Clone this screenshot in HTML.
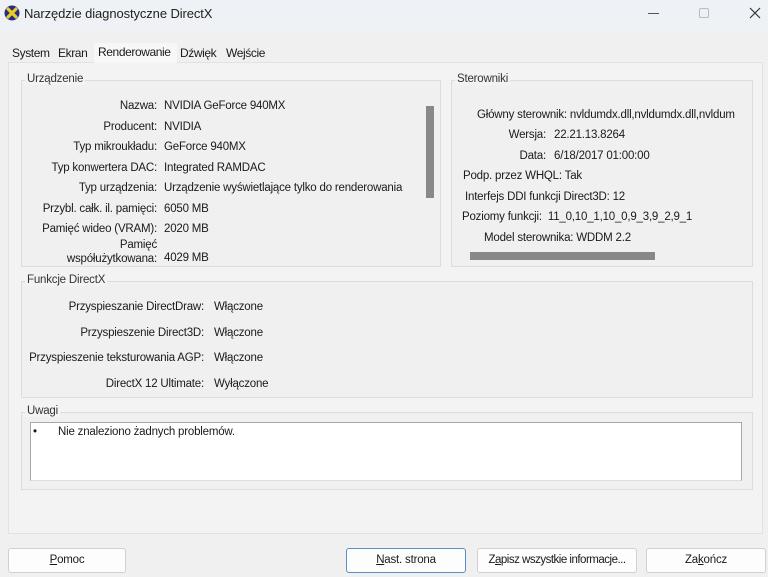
<!DOCTYPE html>
<html><head><meta charset="utf-8"><style>
*{margin:0;padding:0;box-sizing:border-box}
html,body{width:768px;height:577px;overflow:hidden}
body{background:#f0f0f0;font-family:"Liberation Sans",sans-serif;font-size:11.5px;letter-spacing:-0.2px;color:#1a1a1a;position:relative}
.a{position:absolute;white-space:nowrap}
.title{position:absolute;left:0;top:0;width:768px;height:30px;background:#eef1f5}
.page{position:absolute;left:8px;top:62px;width:755px;height:472px;background:#f3f3f3;border:1px solid #e2e2e2}
.gb{position:absolute;border:1px solid #dcdcdc;background:#f0f0f0}
.gl{position:absolute;background:#f3f3f3;padding:0 2px;color:#333}
.r{text-align:right}
.btn{position:absolute;top:548px;height:25px;background:#fdfdfd;border:1px solid #d0d0d0;border-radius:3px;text-align:center;line-height:23px;white-space:nowrap;overflow:hidden}
.tab{position:absolute;top:46px;font-size:12px;letter-spacing:-0.4px;white-space:nowrap}
</style></head><body>
<div class="title"></div>
<svg class="a" style="left:4px;top:5px" width="16" height="16" viewBox="0 0 16 16"><circle cx="8" cy="8" r="7.5" fill="#2a2a8a"/><path d="M4 4L12 12M12 4L4 12" stroke="#e8d020" stroke-width="3.2" stroke-linecap="round"/></svg>
<div class="a" style="left:24px;top:6px;font-size:13px;color:#222;letter-spacing:-0.1px">Narzędzie diagnostyczne DirectX</div>
<div class="a" style="left:648px;top:13px;width:11px;height:1px;background:#555"></div>
<div class="a" style="left:699px;top:8px;width:10px;height:10px;border:1px solid #bbb;border-radius:2px"></div>
<svg class="a" style="left:749px;top:7px" width="12" height="12"><path d="M1 1L11 11M11 1L1 11" stroke="#333" stroke-width="1.2"/></svg>
<div class="page"></div>
<div class="a" style="left:94px;top:43px;width:83px;height:20px;background:#f7f7f7"></div>
<div class="tab" style="left:12px">System</div>
<div class="tab" style="left:58px">Ekran</div>
<div class="tab" style="left:98px;top:45px">Renderowanie</div>
<div class="tab" style="left:180px">Dźwięk</div>
<div class="tab" style="left:226px">Wejście</div>

<div class="gb" style="left:21px;top:80px;width:420px;height:187px"></div>
<div class="gl" style="left:25px;top:73px">Urządzenie</div>
<div class="a" style="left:426px;top:106px;width:8px;height:92px;background:#888"></div>
<div class="a r" style="left:20px;top:96px;width:137px;line-height:20.5px">Nazwa:<br>Producent:<br>Typ mikroukładu:<br>Typ konwertera DAC:<br>Typ urządzenia:<br>Przybl. całk. il. pamięci:<br>Pamięć wideo (VRAM):</div>
<div class="a" style="left:164px;top:96px;line-height:20.5px">NVIDIA GeForce 940MX<br>NVIDIA<br>GeForce 940MX<br>Integrated RAMDAC<br>Urządzenie wyświetlające tylko do renderowania<br>6050 MB<br>2020 MB</div>
<div class="a r" style="left:20px;top:238px;width:137px;line-height:14px">Pamięć<br>współużytkowana:</div>
<div class="a" style="left:164px;top:252px">4029 MB</div>

<div class="gb" style="left:451px;top:80px;width:302px;height:187px"></div>
<div class="gl" style="left:455px;top:73px">Sterowniki</div>
<div class="a" style="left:470px;top:252px;width:185px;height:8px;background:#888"></div>
<div class="a" style="left:477px;top:109px;width:275px;overflow:hidden">Główny sterownik: nvldumdx.dll,nvldumdx.dll,nvldum</div>
<div class="a r" style="left:460px;top:129px;width:86px">Wersja:</div><div class="a" style="left:554px;top:129px">22.21.13.8264</div>
<div class="a r" style="left:460px;top:150px;width:86px">Data:</div><div class="a" style="left:554px;top:150px">6/18/2017 01:00:00</div>
<div class="a" style="left:463px;top:170px">Podp. przez WHQL: Tak</div>
<div class="a" style="left:465px;top:191px">Interfejs DDI funkcji Direct3D: 12</div>
<div class="a" style="left:462px;top:211px">Poziomy funkcji:&nbsp; 11_0,10_1,10_0,9_3,9_2,9_1</div>
<div class="a" style="left:484px;top:232px">Model sterownika: WDDM 2.2</div>

<div class="gb" style="left:21px;top:281px;width:732px;height:117px"></div>
<div class="gl" style="left:25px;top:274px">Funkcje DirectX</div>
<div class="a r" style="left:20px;top:295px;width:184px;line-height:25.7px">Przyspieszanie DirectDraw:<br>Przyspieszenie Direct3D:<br>Przyspieszenie teksturowania AGP:<br>DirectX 12 Ultimate:</div>
<div class="a" style="left:214px;top:295px;line-height:25.7px">Włączone<br>Włączone<br>Włączone<br>Wyłączone</div>

<div class="gb" style="left:21px;top:412px;width:732px;height:78px"></div>
<div class="gl" style="left:25px;top:405px">Uwagi</div>
<div class="a" style="left:30px;top:422px;width:712px;height:59px;background:#fff;border:1px solid #a8a8a8;border-bottom-color:#ddd"></div>
<div class="a" style="left:33px;top:426px">•</div>
<div class="a" style="left:58px;top:426px">Nie znaleziono żadnych problemów.</div>

<div class="btn" style="left:8px;width:118px"><u>P</u>omoc</div>
<div class="btn" style="left:346px;width:120px;border-color:#5b8fc5"><u>N</u>ast. strona</div>
<div class="btn" style="left:477px;width:160px;letter-spacing:-0.5px">Z<u>a</u>pisz wszystkie informacje...</div>
<div class="btn" style="left:646px;width:120px">Za<u>k</u>ończ</div>
</body></html>
